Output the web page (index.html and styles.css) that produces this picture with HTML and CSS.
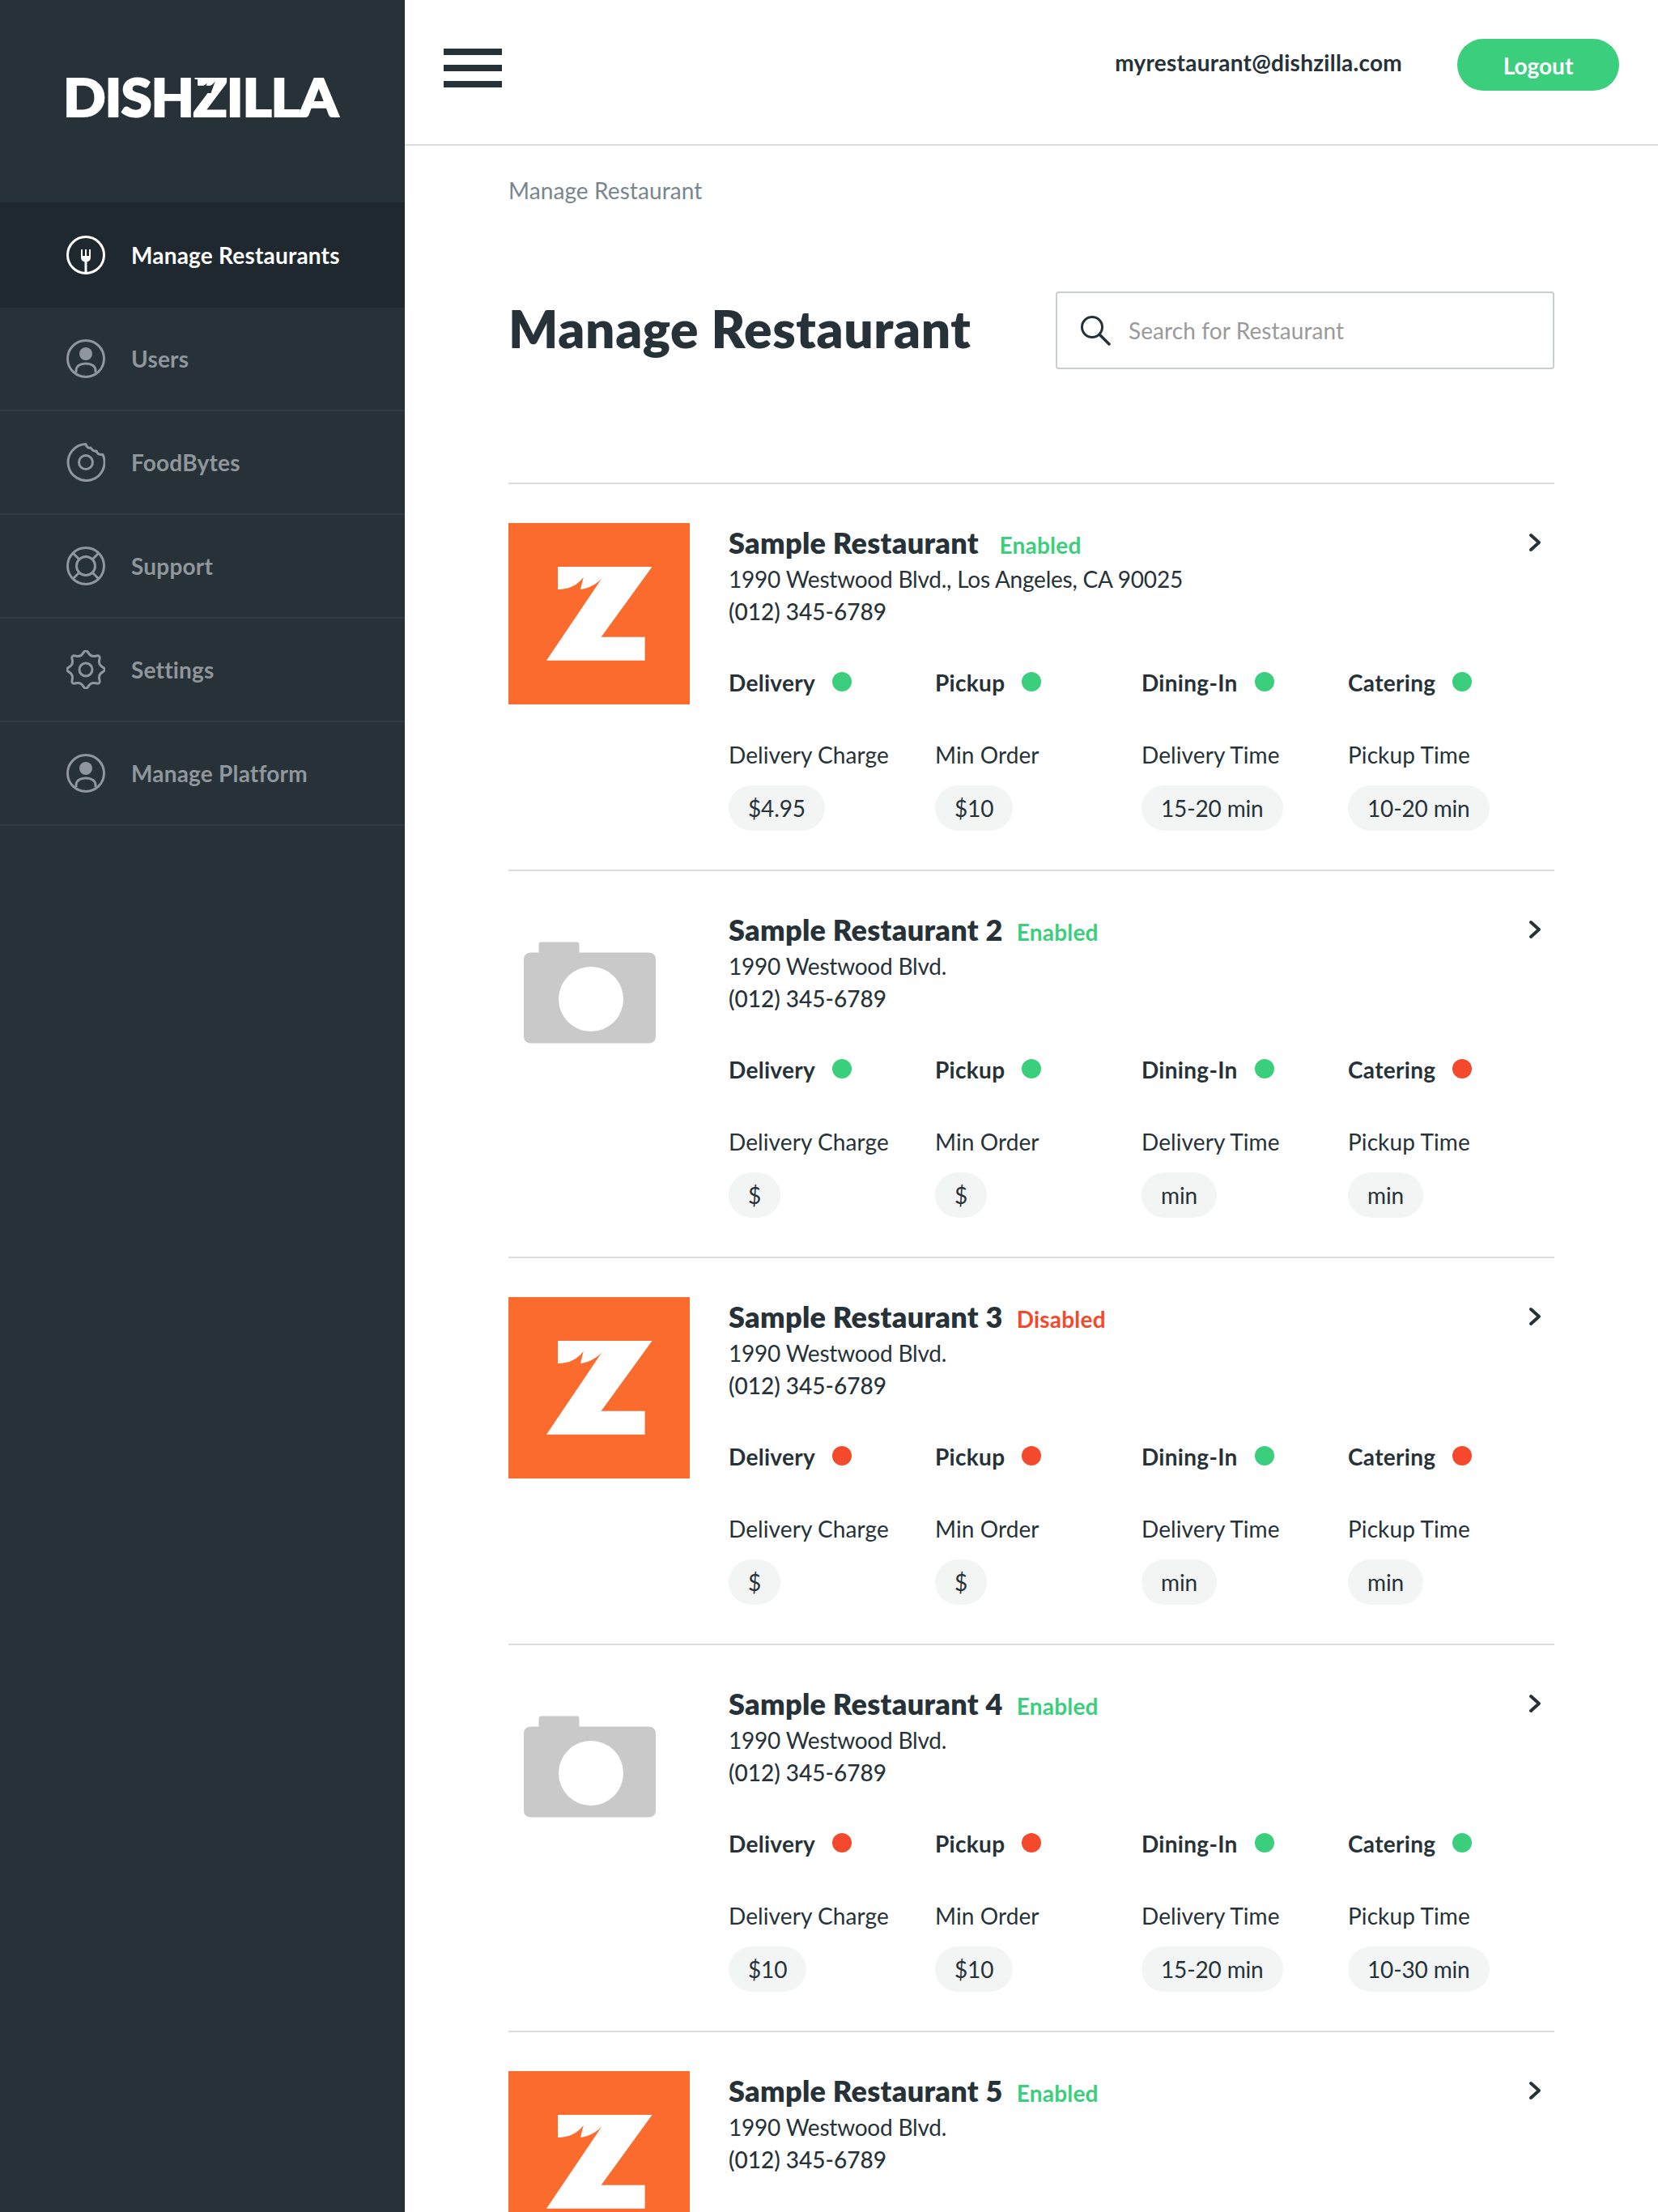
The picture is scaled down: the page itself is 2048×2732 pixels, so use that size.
FILE: index.html
```html
<!DOCTYPE html>
<html lang="en">
<head>
<meta charset="utf-8">
<title>Dishzilla - Manage Restaurant</title>
<link rel="stylesheet" href="styles.css">
</head>
<body>
<svg class="sprite" aria-hidden="true">
  <symbol id="z-logo" viewBox="0 0 224 224">
    <rect width="224" height="224" fill="#fc6b2e"/>
    <path fill="#fff" d="M61 54H177.500L114.600 140.700H168.600V169.700H47L121 60C115 72 103 80 89 82L92.700 67C85 77 74 82 61 82Z"/>
  </symbol>
  <symbol id="camera" viewBox="0 0 224 224">
    <path fill="#c9c9c9" stroke="#c9c9c9" stroke-width="1" d="M38 53V42Q38 40 40 40H85Q87 40 87 42V53H173Q181.500 53 181.500 61V156Q181.500 164 173 164H28Q19.500 164 19.500 156V61Q19.500 53 28 53Z"/>
    <circle cx="102" cy="110" r="40" fill="#fff"/>
  </symbol>
  <symbol id="i-fork" viewBox="0 0 48 48">
    <circle cx="24" cy="24" r="22.500" fill="none" stroke="currentColor" stroke-width="3"/>
    <path fill="currentColor" d="M18 17H20V25H23V17H25V25H28V17H30V27C30 30 28 32 25.500 32.500V46H22.500V32.500C20 32 18 30 18 27Z"/>
  </symbol>
  <symbol id="i-user" viewBox="0 0 48 48">
    <circle cx="24" cy="24" r="22.500" fill="none" stroke="currentColor" stroke-width="3"/>
    <circle cx="24" cy="18" r="8" fill="currentColor"/>
    <path fill="none" stroke="currentColor" stroke-width="3" d="M12 41V39C12 33 17 30 24 30S36 33 36 39V41"/>
  </symbol>
  <symbol id="i-donut" viewBox="0 0 48 48">
    <path fill="none" stroke="currentColor" stroke-width="3" stroke-linejoin="round" d="M24 1.500C25 5 27 7 30 6C32 9 34 11 37 10C38 13 41 15 45 14.500A22.500 22.500 0 1 1 24 1.500Z"/>
    <circle cx="24" cy="24" r="8.500" fill="none" stroke="currentColor" stroke-width="3"/>
  </symbol>
  <symbol id="i-buoy" viewBox="0 0 48 48">
    <circle cx="24" cy="24" r="22.500" fill="none" stroke="currentColor" stroke-width="3"/>
    <circle cx="24" cy="24" r="11.500" fill="none" stroke="currentColor" stroke-width="3"/>
    <path fill="none" stroke="currentColor" stroke-width="3" d="M8 8L16 16M40 8L32 16M8 40L16 32M40 40L32 32"/>
  </symbol>
  <symbol id="i-gear" viewBox="0 0 48 48">
    <path transform="translate(24 24)" fill="none" stroke="currentColor" stroke-width="3" d="M20.620 -3.160Q26 0 20.620 3.160T16.810 12.350T12.350 16.810T3.160 20.620T-3.160 20.620T-12.350 16.810T-16.810 12.350T-20.620 3.160T-20.620 -3.160T-16.810 -12.350T-12.350 -16.810T-3.160 -20.620T3.160 -20.620T12.350 -16.810T16.810 -12.350T20.620 -3.160Z"/>
    <circle cx="24" cy="24" r="8" fill="none" stroke="currentColor" stroke-width="3"/>
  </symbol>
  <symbol id="chev" viewBox="0 0 16 24">
    <path fill="none" stroke="currentColor" stroke-width="4" stroke-linecap="round" stroke-linejoin="round" d="M3 3L13 12L3 21"/>
  </symbol>
</svg>
<div class="app">
  <aside class="sidebar">
    <div class="brand"><span class="wordmark">DISH<span class="z">Z<svg class="flame" viewBox="0 0 40 20"><path d="M0 0H4.800V9.500C9 9.500 13 8 15.500 4.400L14.300 9.500C19 9 23 6 25 2L20 17H0Z"/></svg></span>ILLA</span></div>
    <nav class="nav">
      <a class="nav-item active"><svg class="nav-icon"><use href="#i-fork"/></svg><span>Manage Restaurants</span></a>
      <a class="nav-item"><svg class="nav-icon"><use href="#i-user"/></svg><span>Users</span></a>
      <a class="nav-item"><svg class="nav-icon"><use href="#i-donut"/></svg><span>FoodBytes</span></a>
      <a class="nav-item"><svg class="nav-icon"><use href="#i-buoy"/></svg><span>Support</span></a>
      <a class="nav-item"><svg class="nav-icon"><use href="#i-gear"/></svg><span>Settings</span></a>
      <a class="nav-item"><svg class="nav-icon"><use href="#i-user"/></svg><span>Manage Platform</span></a>
    </nav>
  </aside>
  <div class="main">
    <header class="topbar">
      <div class="burger"><i></i><i></i><i></i></div>
      <div class="email">myrestaurant@dishzilla.com</div>
      <button class="logout">Logout</button>
    </header>
    <main class="content">
      <div class="crumb">Manage Restaurant</div>
      <div class="page-head">
        <h1>Manage Restaurant</h1>
        <label class="search">
          <svg class="search-icon" viewBox="0 0 38 38"><circle cx="15" cy="15" r="12.500" fill="none" stroke="#263238" stroke-width="3"/><path d="M24 24L36 36" stroke="#263238" stroke-width="3.500" stroke-linecap="round"/></svg>
          <input type="text" placeholder="Search for Restaurant">
        </label>
      </div>
      <section class="list">
        <article class="row">
          <svg class="thumb"><use href="#z-logo"/></svg>
          <div class="info">
            <div class="title-line"><h2>Sample Restaurant&nbsp;</h2><span class="status on">Enabled</span><svg class="chev"><use href="#chev"/></svg></div>
            <p class="addr">1990 Westwood Blvd., Los Angeles, CA 90025</p>
            <p class="phone">(012) 345-6789</p>
            <div class="grid features">
              <div class="feat">Delivery<i class="dot on"></i></div><div class="feat">Pickup<i class="dot on"></i></div><div class="feat">Dining-In<i class="dot on"></i></div><div class="feat">Catering<i class="dot on"></i></div>
            </div>
            <div class="grid stats">
              <div class="stat">Delivery Charge<span class="pill">$4.95</span></div><div class="stat">Min Order<span class="pill">$10</span></div><div class="stat">Delivery Time<span class="pill">15-20 min</span></div><div class="stat">Pickup Time<span class="pill">10-20 min</span></div>
            </div>
          </div>
        </article>
        <article class="row">
          <svg class="thumb"><use href="#camera"/></svg>
          <div class="info">
            <div class="title-line"><h2>Sample Restaurant 2</h2><span class="status on">Enabled</span><svg class="chev"><use href="#chev"/></svg></div>
            <p class="addr">1990 Westwood Blvd.</p>
            <p class="phone">(012) 345-6789</p>
            <div class="grid features">
              <div class="feat">Delivery<i class="dot on"></i></div><div class="feat">Pickup<i class="dot on"></i></div><div class="feat">Dining-In<i class="dot on"></i></div><div class="feat">Catering<i class="dot off"></i></div>
            </div>
            <div class="grid stats">
              <div class="stat">Delivery Charge<span class="pill">$</span></div><div class="stat">Min Order<span class="pill">$</span></div><div class="stat">Delivery Time<span class="pill">min</span></div><div class="stat">Pickup Time<span class="pill">min</span></div>
            </div>
          </div>
        </article>
        <article class="row">
          <svg class="thumb"><use href="#z-logo"/></svg>
          <div class="info">
            <div class="title-line"><h2>Sample Restaurant 3</h2><span class="status off">Disabled</span><svg class="chev"><use href="#chev"/></svg></div>
            <p class="addr">1990 Westwood Blvd.</p>
            <p class="phone">(012) 345-6789</p>
            <div class="grid features">
              <div class="feat">Delivery<i class="dot off"></i></div><div class="feat">Pickup<i class="dot off"></i></div><div class="feat">Dining-In<i class="dot on"></i></div><div class="feat">Catering<i class="dot off"></i></div>
            </div>
            <div class="grid stats">
              <div class="stat">Delivery Charge<span class="pill">$</span></div><div class="stat">Min Order<span class="pill">$</span></div><div class="stat">Delivery Time<span class="pill">min</span></div><div class="stat">Pickup Time<span class="pill">min</span></div>
            </div>
          </div>
        </article>
        <article class="row">
          <svg class="thumb"><use href="#camera"/></svg>
          <div class="info">
            <div class="title-line"><h2>Sample Restaurant 4</h2><span class="status on">Enabled</span><svg class="chev"><use href="#chev"/></svg></div>
            <p class="addr">1990 Westwood Blvd.</p>
            <p class="phone">(012) 345-6789</p>
            <div class="grid features">
              <div class="feat">Delivery<i class="dot off"></i></div><div class="feat">Pickup<i class="dot off"></i></div><div class="feat">Dining-In<i class="dot on"></i></div><div class="feat">Catering<i class="dot on"></i></div>
            </div>
            <div class="grid stats">
              <div class="stat">Delivery Charge<span class="pill">$10</span></div><div class="stat">Min Order<span class="pill">$10</span></div><div class="stat">Delivery Time<span class="pill">15-20 min</span></div><div class="stat">Pickup Time<span class="pill">10-30 min</span></div>
            </div>
          </div>
        </article>
        <article class="row">
          <svg class="thumb"><use href="#z-logo"/></svg>
          <div class="info">
            <div class="title-line"><h2>Sample Restaurant 5</h2><span class="status on">Enabled</span><svg class="chev"><use href="#chev"/></svg></div>
            <p class="addr">1990 Westwood Blvd.</p>
            <p class="phone">(012) 345-6789</p>
          </div>
        </article>
      </section>
    </main>
  </div>
</div>
</body>
</html>
```
FILE: styles.css
```css
* { box-sizing: border-box; }
html, body { margin: 0; padding: 0; height: 100%; overflow: hidden; }
body { font-family: Lato, "Liberation Sans", sans-serif; color: #263238; background: #fff; font-size: 28px; }
.sprite { width: 0; height: 0; position: absolute; }
.app { display: flex; height: 2732px; overflow: hidden; }

.sidebar { width: 500px; flex: none; background: #273138; }
.brand { height: 250px; padding: 83px 0 0 78px; }
.wordmark { display: inline-block; font-weight: 900; font-size: 64px; line-height: 74px; color: #fff; letter-spacing: -1px; -webkit-text-stroke: 2px #fff; transform: scaleX(1.08); transform-origin: left center; }
.z { position: relative; display: inline-block; }
.flame { position: absolute; left: 0; top: 15px; width: 40px; height: 20px; fill: #273138; overflow: visible; }
.nav { display: flex; flex-direction: column; }
.nav-item { display: flex; align-items: center; gap: 32px; height: 128px; padding-left: 82px; border-bottom: 2px solid #2f3d48; color: #8f979c; font-weight: 700; font-size: 28px; letter-spacing: 0.2px; }
.nav-item.active { height: 130px; background: #1e282e; color: #fff; border-bottom: 0; }
.nav-icon { width: 48px; height: 48px; flex: none; }

.main { flex: 1; min-width: 0; display: flex; flex-direction: column; }
.topbar { height: 180px; flex: none; display: flex; align-items: flex-start; padding: 48px 48px 0 48px; border-bottom: 2px solid #dcdcdc; }
.burger { width: 72px; margin-top: 12px; display: flex; flex-direction: column; gap: 12px; margin-right: auto; }
.burger i { display: block; height: 8px; background: #263238; }
.email { margin-top: 11px; line-height: 36px; font-weight: 700; font-size: 28px; margin-right: 68px; letter-spacing: 0.25px; }
.logout { width: 200px; height: 64px; border: 0; border-radius: 32px; background: #3bcf7d; color: #fff; font: 700 28px Lato, sans-serif; padding: 2px 0 0; }

.content { padding: 0 128px; flex: 1; }
.crumb { margin-top: 35px; line-height: 40px; color: #78868d; font-size: 28px; letter-spacing: 0.1px; }
.page-head { display: flex; align-items: center; justify-content: space-between; margin-top: 105px; height: 96px; }
h1 { margin: -4px 0 0; font-size: 64px; font-weight: 800; line-height: 96px; color: #263238; letter-spacing: 0.6px; }
.search { width: 616px; height: 96px; border: 2px solid #c8cdd1; border-radius: 4px; display: flex; align-items: center; padding-left: 28px; gap: 22px; }
.search-icon { width: 38px; height: 38px; flex: none; }
.search input { flex: 1; min-width: 0; border: 0; outline: 0; background: none; font: 400 28px Lato, sans-serif; color: #263238; padding: 0; letter-spacing: 0.1px; }
.search input::placeholder { color: #9a9a9a; opacity: 1; }

.list { margin-top: 140px; }
.row { display: flex; gap: 48px; height: 478px; padding-top: 48px; border-top: 2px solid #dcdcdc; }
.thumb { width: 224px; height: 224px; flex: none; }
.info { flex: 1; min-width: 0; padding-top: 2px; }
.title-line { display: flex; align-items: baseline; gap: 17px; height: 47px; }
h2 { margin: 0; font-size: 36px; line-height: 44px; font-weight: 800; white-space: pre; letter-spacing: 0.3px; }
.status { font-weight: 700; font-size: 28px; letter-spacing: 0.2px; }
.status.on { color: #3bcf7d; }
.status.off { color: #f4492c; }
.chev { width: 16px; height: 24px; margin-left: auto; margin-right: 16px; align-self: flex-start; margin-top: 10px; }
.addr, .phone { margin: 0; line-height: 40px; font-size: 28px; }
.addr { font-weight: 400; letter-spacing: -0.22px; }
.phone { font-weight: 500; }
.grid { display: grid; grid-template-columns: repeat(4, 255px); }
.features { margin-top: 48px; }
.feat { display: flex; align-items: center; gap: 21px; height: 40px; font-weight: 700; font-size: 28px; letter-spacing: 0.3px; }
.dot { width: 24px; height: 24px; border-radius: 50%; margin-top: -2px; }
.dot.on { background: #3bcf7d; }
.dot.off { background: #f4492c; }
.stats { margin-top: 49px; }
.stat { display: flex; flex-direction: column; align-items: flex-start; line-height: 40px; font-weight: 400; font-size: 28px; gap: 18px; letter-spacing: 0.1px; }
.pill { display: block; height: 56px; line-height: 56px; padding: 0 24px; border-radius: 28px; background: #f3f5f5; font-weight: 400; letter-spacing: -0.15px; }
```
